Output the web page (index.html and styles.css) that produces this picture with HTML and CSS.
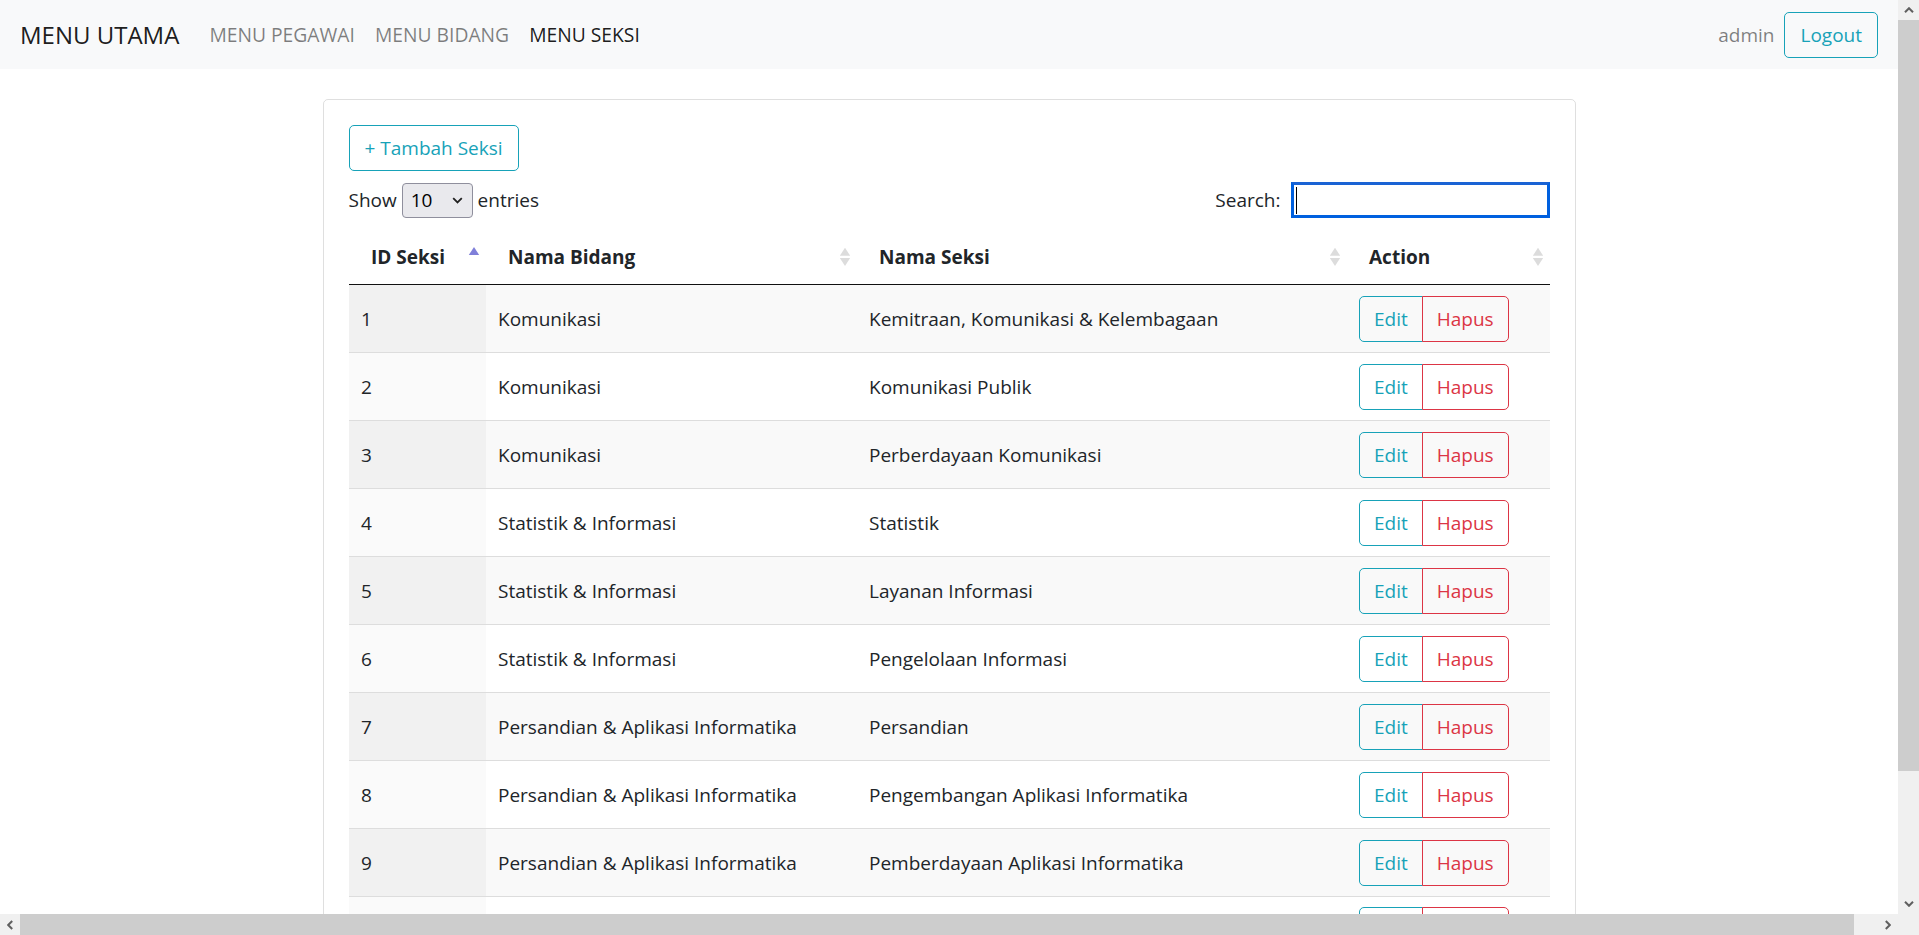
FILE: index.html
```html
<!DOCTYPE html>
<html lang="id">
<head>
<meta charset="utf-8">
<title>Menu Seksi</title>
<link rel="stylesheet" href="styles.css">
</head>
<body>
<div class="window">
  <div class="viewport">
    <nav class="navbar">
      <a class="brand">MENU UTAMA</a>
      <ul class="nav">
        <li><a class="nav-link">MENU PEGAWAI</a></li>
        <li><a class="nav-link">MENU BIDANG</a></li>
        <li><a class="nav-link active">MENU SEKSI</a></li>
      </ul>
      <div class="nav-right">
        <span class="user">admin</span>
        <button class="btn btn-info">Logout</button>
      </div>
    </nav>
    <main class="page">
      <div class="card">
        <div class="card-body">
          <button class="btn btn-info">+ Tambah Seksi</button>
          <div class="dt-controls">
            <label class="dt-length">Show <select class="dt-select"><option>10</option></select> entries</label>
            <label class="dt-filter">Search:<span class="search-box"><input class="search-input" type="search"><span class="caret"></span></span></label>
          </div>
          <table class="dt">
            <colgroup>
              <col class="c1"><col class="c2"><col class="c3"><col class="c4">
            </colgroup>
            <thead>
              <tr>
                <th class="sort-asc">ID Seksi</th>
                <th class="sort-both">Nama Bidang</th>
                <th class="sort-both">Nama Seksi</th>
                <th class="sort-both">Action</th>
              </tr>
            </thead>
            <tbody>
              <tr><td>1</td><td>Komunikasi</td><td>Kemitraan, Komunikasi &amp; Kelembagaan</td><td><div class="btn-group"><button class="btn btn-info">Edit</button><button class="btn btn-danger">Hapus</button></div></td></tr>
              <tr><td>2</td><td>Komunikasi</td><td>Komunikasi Publik</td><td><div class="btn-group"><button class="btn btn-info">Edit</button><button class="btn btn-danger">Hapus</button></div></td></tr>
              <tr><td>3</td><td>Komunikasi</td><td>Perberdayaan Komunikasi</td><td><div class="btn-group"><button class="btn btn-info">Edit</button><button class="btn btn-danger">Hapus</button></div></td></tr>
              <tr><td>4</td><td>Statistik &amp; Informasi</td><td>Statistik</td><td><div class="btn-group"><button class="btn btn-info">Edit</button><button class="btn btn-danger">Hapus</button></div></td></tr>
              <tr><td>5</td><td>Statistik &amp; Informasi</td><td>Layanan Informasi</td><td><div class="btn-group"><button class="btn btn-info">Edit</button><button class="btn btn-danger">Hapus</button></div></td></tr>
              <tr><td>6</td><td>Statistik &amp; Informasi</td><td>Pengelolaan Informasi</td><td><div class="btn-group"><button class="btn btn-info">Edit</button><button class="btn btn-danger">Hapus</button></div></td></tr>
              <tr><td>7</td><td>Persandian &amp; Aplikasi Informatika</td><td>Persandian</td><td><div class="btn-group"><button class="btn btn-info">Edit</button><button class="btn btn-danger">Hapus</button></div></td></tr>
              <tr><td>8</td><td>Persandian &amp; Aplikasi Informatika</td><td>Pengembangan Aplikasi Informatika</td><td><div class="btn-group"><button class="btn btn-info">Edit</button><button class="btn btn-danger">Hapus</button></div></td></tr>
              <tr><td>9</td><td>Persandian &amp; Aplikasi Informatika</td><td>Pemberdayaan Aplikasi Informatika</td><td><div class="btn-group"><button class="btn btn-info">Edit</button><button class="btn btn-danger">Hapus</button></div></td></tr>
              <tr class="row-clipped"><td></td><td></td><td></td><td><div class="btn-group"><button class="btn btn-info">Edit</button><button class="btn btn-danger">Hapus</button></div></td></tr>
            </tbody>
          </table>
        </div>
      </div>
    </main>
  </div>
  <div class="vscroll">
    <div class="sb-btn sb-v"><svg width="10" height="6" viewBox="0 0 10 6"><path d="M1 5.2L5 1.2L9 5.2" fill="none" stroke="#5f5f5f" stroke-width="2"/></svg></div>
    <div class="vthumb"></div>
    <div class="sb-fill"></div>
    <div class="sb-btn sb-v"><svg width="10" height="6" viewBox="0 0 10 6"><path d="M1 0.8L5 4.8L9 0.8" fill="none" stroke="#5f5f5f" stroke-width="2"/></svg></div>
  </div>
  <div class="hscroll">
    <div class="sb-btn sb-h"><svg width="6" height="10" viewBox="0 0 6 10"><path d="M5.2 1L1.2 5L5.2 9" fill="none" stroke="#5f5f5f" stroke-width="2"/></svg></div>
    <div class="hthumb"></div>
    <div class="sb-fill"></div>
    <div class="sb-btn sb-h"><svg width="6" height="10" viewBox="0 0 6 10"><path d="M0.8 1L4.8 5L0.8 9" fill="none" stroke="#5f5f5f" stroke-width="2"/></svg></div>
  </div>
  <div class="corner"></div>
</div>
</body>
</html>
```

FILE: styles.css
```css
* { box-sizing: border-box; }

html, body {
  margin: 0;
  height: 100%;
  overflow: hidden;
}

body {
  font-family: "Open Sans", "Noto Sans", sans-serif;
  font-size: 19px;
  line-height: 30px;
  color: #212529;
  background: #fff;
}

.window {
  display: grid;
  grid-template-columns: 1fr 21px;
  grid-template-rows: 1fr 21px;
  height: 100vh;
}

.viewport {
  overflow: hidden;
  min-width: 0;
  min-height: 0;
}

/* Navbar */
.navbar {
  display: flex;
  align-items: center;
  height: 69px;
  padding: 0 20px;
  background: #f8f9fa;
}

.brand {
  font-size: 24px;
  color: rgba(0, 0, 0, .9);
  margin-right: 20px;
}

.nav {
  display: flex;
  list-style: none;
  margin: 0;
  padding: 0;
}

.nav-link {
  display: block;
  padding: 0 10px;
  font-size: 19.3px;
  color: rgba(0, 0, 0, .5);
}

.nav-link.active { color: rgba(0, 0, 0, .9); }

.nav-right {
  margin-left: auto;
  display: flex;
  align-items: center;
  gap: 10px;
}

.user { color: rgba(0, 0, 0, .5); }

/* Buttons */
.btn {
  font: inherit;
  line-height: 30px;
  display: inline-block;
  padding: 7px 15px;
  border: 1px solid;
  border-radius: 5px;
  background: transparent;
  cursor: pointer;
}

.btn-info { color: #17a2b8; border-color: #17a2b8; }
.btn-danger { color: #dc3545; border-color: #dc3545; }

.btn-group { display: inline-flex; }
.btn-group .btn { padding-left: 14px; padding-right: 14px; }
.btn-group .btn:first-child { border-top-right-radius: 0; border-bottom-right-radius: 0; }
.btn-group .btn:last-child { border-top-left-radius: 0; border-bottom-left-radius: 0; margin-left: -1px; }

/* Card */
.page { padding-top: 30px; }

.card {
  width: 1253px;
  margin: 0 auto;
  border: 1px solid rgba(0, 0, 0, .125);
  border-radius: 5px;
}

.card-body { padding: 25px; }

/* DataTables controls */
.dt-controls {
  display: flex;
  justify-content: space-between;
  align-items: center;
  margin-top: 11px;
  height: 36px;
}

.dt-length, .dt-filter {
  display: flex;
  align-items: center;
  white-space: pre;
}

.dt-select {
  font: inherit;
  font-size: 19px;
  line-height: 1;
  appearance: none;
  width: 71px;
  height: 35px;
  padding: 0 0 0 8px;
  color: #000;
  background-color: #e9e9ed;
  background-image: url("data:image/svg+xml,%3Csvg xmlns='http://www.w3.org/2000/svg' width='11' height='7' viewBox='0 0 11 7'%3E%3Cpath d='M1.2 1.2l4.3 4.3 4.3-4.3' fill='none' stroke='%23222' stroke-width='1.8'/%3E%3C/svg%3E");
  background-repeat: no-repeat;
  background-position: right 9px center;
  border: 1px solid #8f8f9d;
  border-radius: 4px;
}

.search-box {
  position: relative;
  display: block;
  margin-left: 10px;
}

.search-input {
  display: block;
  width: 259px;
  height: 36px;
  font: inherit;
  border: 3px solid #0060df;
  border-top-color: #1a63d4;
  outline: none;
  padding: 0 4px;
  background: #fff;
}

.caret {
  position: absolute;
  left: 5px;
  top: 5px;
  width: 1px;
  height: 27px;
  background: #000;
}

/* Table */
.dt {
  width: 100%;
  table-layout: fixed;
  border-collapse: separate;
  border-spacing: 0;
  margin-top: 11px;
}

.c1 { width: 137px; }
.c2 { width: 371px; }
.c3 { width: 490px; }
.c4 { width: 203px; }

.dt th {
  text-align: left;
  font-weight: bold;
  padding: 12.5px 22.5px;
  border-bottom: 1px solid #111;
  background-repeat: no-repeat;
  background-position: right center;
  background-size: 24px 24px;
}

.sort-both {
  background-image: url("data:image/svg+xml,%3Csvg xmlns='http://www.w3.org/2000/svg' width='19' height='19' viewBox='0 0 19 19'%3E%3Cpath d='M9.5 2.2L13.6 8.6H5.4z' fill='%23dcdcdc'/%3E%3Cpath d='M9.5 16.6L13.6 10.2H5.4z' fill='%23dcdcdc'/%3E%3C/svg%3E");
}

.sort-asc {
  background-image: url("data:image/svg+xml,%3Csvg xmlns='http://www.w3.org/2000/svg' width='19' height='19' viewBox='0 0 19 19'%3E%3Cpath d='M9.5 1.6L13.6 8H5.4z' fill='%237f7fd9'/%3E%3C/svg%3E");
}

.dt td {
  height: 68px;
  padding: 0 12.5px;
  vertical-align: middle;
  border-top: 1px solid #ddd;
  background: #fff;
}

.dt tbody tr:first-child td { border-top: none; height: 67px; }

.dt tbody tr:nth-child(odd) td { background: #f9f9f9; }
.dt tbody tr:nth-child(odd) td:first-child { background: #f1f1f1; }
.dt tbody tr:nth-child(even) td:first-child { background: #fafafa; }

.row-clipped td { vertical-align: top; padding-top: 10px; }

/* Fake scrollbars */
.vscroll, .hscroll, .corner { background: #f0f0f0; }

.vscroll {
  display: flex;
  flex-direction: column;
}

.hscroll { display: flex; }

.sb-btn {
  display: flex;
  align-items: center;
  justify-content: center;
  flex: none;
}

.sb-v { height: 20px; }
.vscroll .sb-btn:last-child { height: 21px; }
.sb-h { width: 20px; }
.hscroll .sb-btn:last-child { width: 21px; }

.sb-fill { flex: 1; }

.vthumb { height: 751px; background: #cdcdcd; }
.hthumb { width: 1834px; background: #cdcdcd; }
```
